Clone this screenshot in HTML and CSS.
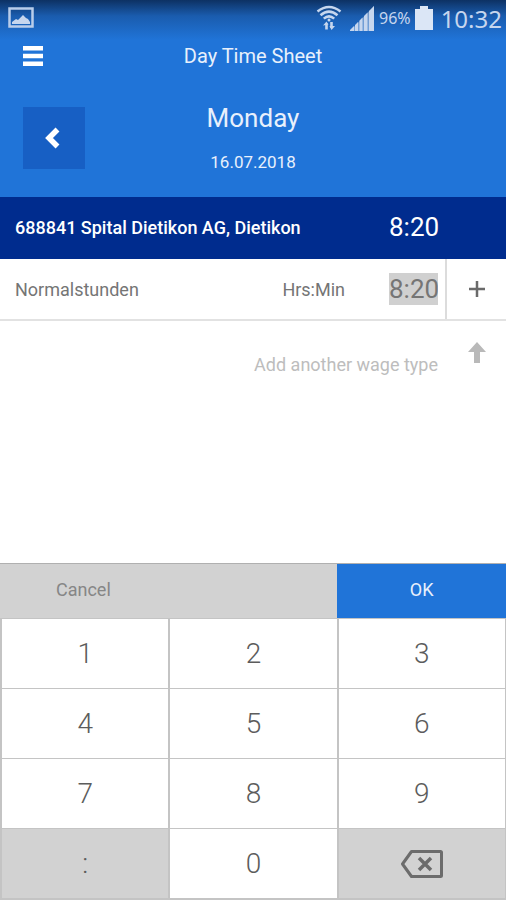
FILE: index.html
```
<!DOCTYPE html>
<html lang="en">
<head>
  <meta charset="UTF-8" />
  <meta name="viewport" content="width=device-width, initial-scale=1" />
  <title>Day Time Sheet</title>
  <link rel="stylesheet" href="styles.css">
</head>
<body>
  <header class="header">
    <div class="status-bar">
      <svg class="status-picture" width="26" height="22" viewBox="0 0 26 22">
        <rect x="1.5" y="1.5" width="23" height="18" fill="none" stroke="#b9cdea" stroke-width="2.5" />
        <path d="M4 17v-2l4-3 2 1 5-5 3 3 2 1 2 3v2z" fill="#c6d6ee" />
      </svg>
      <svg width="26" height="26" viewBox="0 0 26 26" fill="none" stroke="#c6d6ee" stroke-width="2.6">
        <path d="M1.500 6.500Q13-2.500 24.500 6.500" />
        <path d="M4.500 10.200Q13 3 21.500 10.200" />
        <path d="M7.800 13.600Q13 9 18.200 13.600" />
        <circle cx="13" cy="15" r="1.500" fill="#c6d6ee" stroke="none" />
        <path d="M10.500 24.500v-6M15.500 17v6" />
        <path d="M7 20.500l3.500-4 2 3zM13.500 21l2 4 3.500-4z" fill="#c6d6ee" stroke="none" />
      </svg>
      <svg class="status-signal" width="25" height="25" viewBox="0 0 25 25" fill="#c6d6ee">
        <path d="M0 25v-1l4-4v5zM5 25v-6l3-3v9zM9.500 25V14.500l3-3V25zM14 25V10l3.500-3.500V25zM19 25V5l5-5v25z" />
        <path d="M0 25L24 0v25z" opacity=".5" />
      </svg>
      <span class="status-percent">96%</span>
      <svg width="18" height="24" viewBox="0 0 18 24">
        <path d="M0 3h5V0h8v3h5v21H0z" fill="#dbe6f6" />
      </svg>
      <span class="status-clock">10:32</span>
    </div>

    <div class="title-bar">
      <button class="icon-btn" aria-label="Menu">
        <svg width="20" height="20" viewBox="0 0 20 20" fill="#fff">
          <path d="M0 0h20v4.500H0zM0 7.800h20v4.400H0zM0 15.500h20V20H0z" />
        </svg>
      </button>
      <h1>Day Time Sheet</h1>
    </div>

    <div class="day-bar">
      <button class="prev-btn" aria-label="Previous day">
        <svg width="20" height="22" viewBox="0 0 20 22" fill="none" stroke="#fff" stroke-width="5.500">
          <path d="M13.500 2.500L5 11l8.500 8.500" />
        </svg>
      </button>
      <div class="day">
        <h2>Monday</h2>
        <p>16.07.2018</p>
      </div>
    </div>
  </header>

  <main>
    <div class="row project">
      <span class="name">688841 Spital Dietikon AG, Dietikon</span>
      <span class="hours">8:20</span>
    </div>

    <div class="row wage">
      <label class="name" for="hours">Normalstunden</label>
      <span class="unit">Hrs:Min</span>
      <input type="text" id="hours" class="hours" value="8:20" />
      <button class="add-btn" aria-label="Add wage type">
        <svg width="16" height="16" viewBox="0 0 16 16" stroke="#6a6a6a" stroke-width="2.500">
          <path d="M8 0v16M0 8h16" />
        </svg>
      </button>
    </div>

    <div class="hint">
      <span>Add another wage type</span>
      <svg width="18" height="21" viewBox="0 0 18 21" fill="#b9b9b9">
        <path d="M9 0l9 10h-6v11H6V10H0z" />
      </svg>
    </div>
  </main>

  <section class="keyboard">
    <div class="actions">
      <button class="cancel">Cancel</button>
      <button class="ok">OK</button>
    </div>
    <div class="keys">
      <button>1</button>
      <button>2</button>
      <button>3</button>
      <button>4</button>
      <button>5</button>
      <button>6</button>
      <button>7</button>
      <button>8</button>
      <button>9</button>
      <button class="special">:</button>
      <button>0</button>
      <button class="special" aria-label="Delete">
        <svg width="42" height="28" viewBox="0 0 42 28" fill="none" stroke="#6c6c6c" stroke-width="3">
          <path d="M10.500 1.500H39.500q1 0 1 1V25.500q0 1-1 1H10.500L1.500 14z" stroke-linejoin="round" />
          <path d="M18 8l12 12M30 8L18 20" stroke-width="3.500" />
        </svg>
      </button>
    </div>
  </section>
</body>
</html>
```

FILE: styles.css
```
* {
  box-sizing: border-box;
}

body {
  margin: 0;
  min-height: 100vh;
  display: flex;
  flex-direction: column;
  font-family: Roboto, "Liberation Sans", sans-serif;
  font-size: 18px;
  color: #757575;
  background: #fff;
}

button {
  padding: 0;
  border: none;
  border-radius: 0;
  font: inherit;
  color: inherit;
  background: none;
  cursor: pointer;
}

h1, h2, p {
  margin: 0;
  font-weight: 400;
}

svg {
  display: block;
}

.header {
  color: #e8f0fc;
  background: linear-gradient(#0d3163, #1a5cae 16px, #2074d8 40px);
}

.status-bar {
  height: 36px;
  padding: 0 4px 0 8px;
  display: flex;
  align-items: center;
  gap: 4px;
  font-family: "Noto Sans", sans-serif;
  color: #c6d6ee;
}

.status-picture {
  margin-right: auto;
}

.status-signal {
  margin-left: 4px;
}

.status-percent {
  font-size: 16px;
}

.status-clock {
  margin-left: 4px;
  font-size: 24px;
}

.title-bar,
.day-bar {
  display: grid;
  grid-template-columns: 62px 1fr 62px;
  align-items: center;
  text-align: center;
  padding: 0 23px;
}

.title-bar {
  height: 40px;
}

h1 {
  font-size: 20px;
}

.day-bar {
  padding-top: 24px;
  padding-bottom: 21px;
}

.prev-btn {
  height: 62px;
  display: flex;
  justify-content: center;
  align-items: center;
  background: #175fc4;
}

.day {
  padding: 2px 0;
}

h2 {
  font-size: 26px;
  line-height: 32px;
}

.day p {
  margin-top: 16px;
  font-size: 17px;
  line-height: 24px;
}

.row {
  display: flex;
  align-items: center;
  height: 62px;
  padding-left: 15px;
}

.name {
  flex: 1;
}

.hours {
  width: 49px;
  font-size: 26px;
  line-height: 32px;
}

.project {
  padding-right: 68px;
  padding-bottom: 2px;
  font-weight: 500;
  color: #fff;
  background: #002c8e;
}

.project .hours {
  font-weight: 400;
}

.wage {
  border-bottom: 2px solid #e2e2e2;
}

.unit {
  margin-right: 44px;
}

input.hours {
  height: 32px;
  padding: 0;
  border: none;
  outline: none;
  font-family: inherit;
  color: #757575;
  background: #d0d0d0;
}

.add-btn {
  align-self: stretch;
  width: 61px;
  margin-left: 7px;
  border-left: 2px solid #dcdcdc;
  display: flex;
  justify-content: center;
  align-items: center;
}

.hint {
  display: flex;
  justify-content: flex-end;
  gap: 30px;
  padding: 21px 20px 0 15px;
  color: #bdbdbd;
}

.hint span {
  padding-top: 11px;
  line-height: 24px;
}

.keyboard {
  margin-top: auto;
  border-top: 1px solid #b0b0b0;
}

.actions {
  display: grid;
  grid-template-columns: 2fr 1fr;
  height: 54px;
}

.cancel {
  padding: 0 0 4px 56px;
  text-align: left;
  color: #868686;
  background: #d2d2d2;
}

.ok {
  padding-bottom: 4px;
  color: #e8f0fc;
  background: #2074d8;
}

.keys {
  display: grid;
  grid-template-columns: repeat(3, 1fr);
  column-gap: 2px;
  row-gap: 1px;
  padding: 1px 1px 2px 2px;
  background: #c4c4c4;
}

.keys button {
  height: 69px;
  display: flex;
  justify-content: center;
  align-items: center;
  font-size: 28px;
  font-weight: 300;
  color: #5c5c5c;
  background: #fff;
}

.keys .special {
  background: #d2d2d2;
}
```
